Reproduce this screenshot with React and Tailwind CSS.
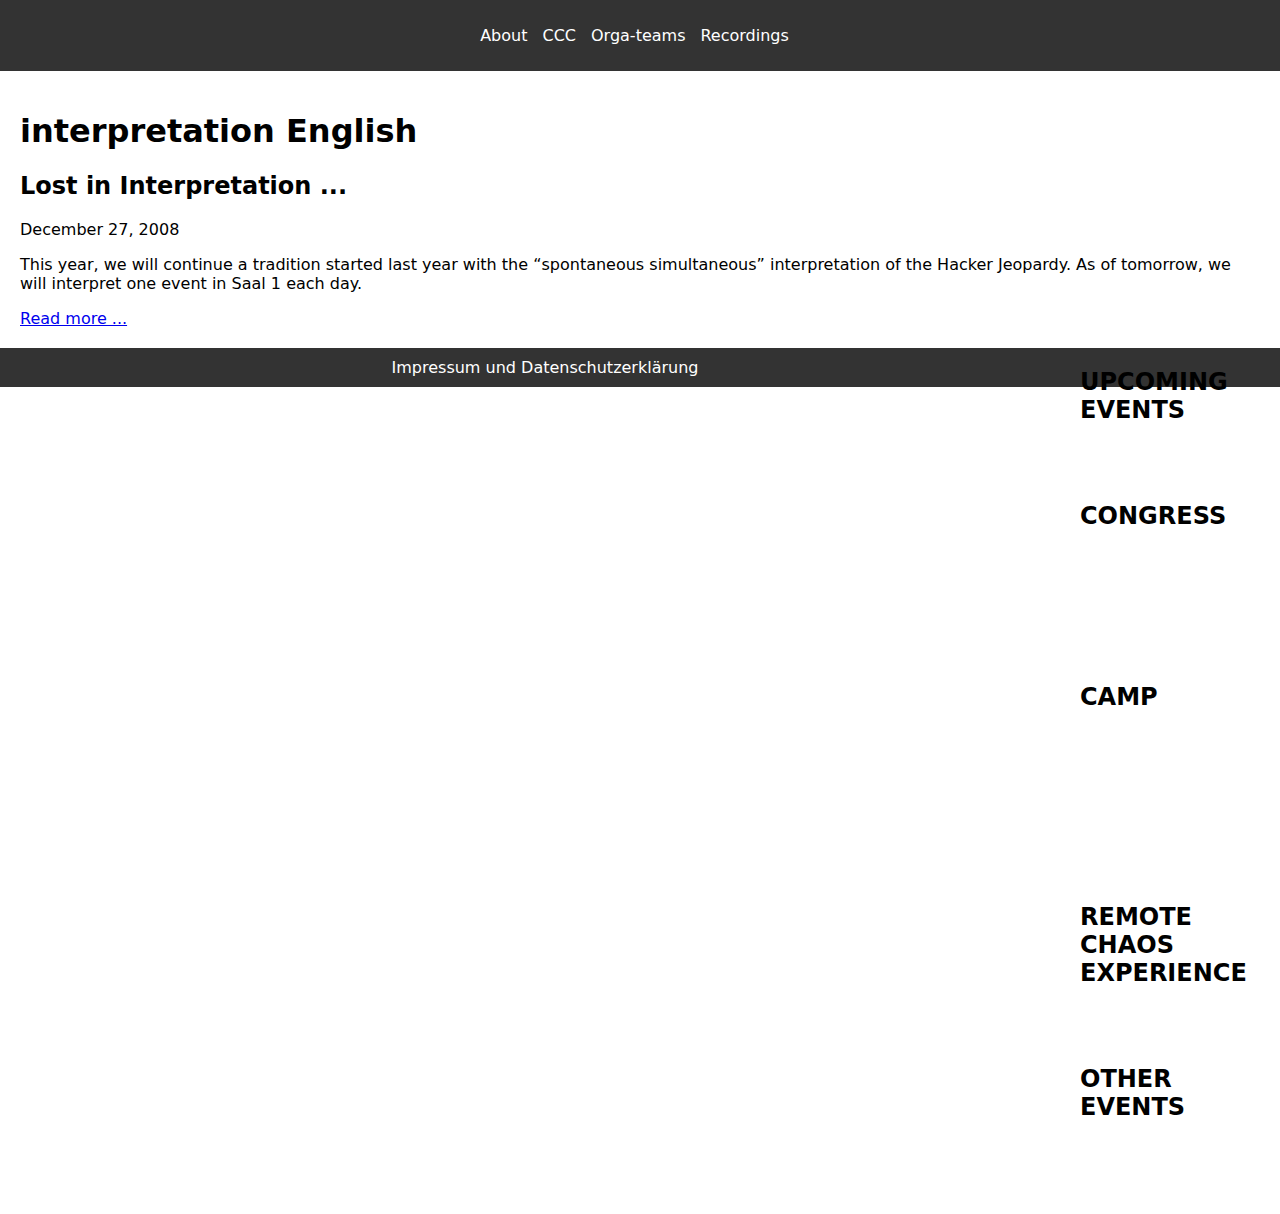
export default function App() {
  const font = "font-['DejaVu_Sans',sans-serif]";
  return (
    <div className={`${font} text-black bg-white min-h-[1214px]`}>
      <header className="h-[71px] bg-[#333333] flex items-center justify-center pr-[11px]">
        <nav className="flex gap-[15px] text-[16px] leading-[19px] text-white">
          <a href="#">About</a>
          <a href="#">CCC</a>
          <a href="#">Orga-teams</a>
          <a href="#">Recordings</a>
        </nav>
      </header>
      <main className="px-[20px] pb-[20px] flex flex-col items-start">
        <h1 className="mt-[42px] text-[32px] leading-[37px] font-bold">interpretation English</h1>
        <h2 className="mt-[22px] text-[24px] leading-[28px] font-bold">Lost in Interpretation ...</h2>
        <p className="mt-[20px] text-[16px] leading-[19px]">December 27, 2008</p>
        <p className="mt-[16px] text-[16px] leading-[19px] pr-[20px]">
          This year, we will continue a tradition started last year with the “spontaneous simultaneous” interpretation of the Hacker Jeopardy. As of tomorrow, we will interpret one event in Saal 1 each day.
        </p>
        <a href="#" className="mt-[16px] text-[16px] leading-[19px] text-[#0000ee] underline">Read more ...</a>
      </main>
      <footer className="h-[39px] bg-[#333333] flex items-center">
        <div className="w-[1090px] text-center text-[16px] leading-[19px] text-white">
          <a href="#">Impressum und Datenschutzerklärung</a>
        </div>
      </footer>
      <aside className="-mt-[39px] ml-[1080px] w-[180px] pb-[93px] flex flex-col uppercase text-[24px] leading-[28px] font-bold">
        <h2 className="mt-[20px]">Upcoming Events</h2>
        <h2 className="mt-[78px]">Congress</h2>
        <h2 className="mt-[153px]">Camp</h2>
        <h2 className="mt-[192px]">Remote Chaos Experience</h2>
        <h2 className="mt-[78px]">Other Events</h2>
      </aside>
    </div>
  );
}
